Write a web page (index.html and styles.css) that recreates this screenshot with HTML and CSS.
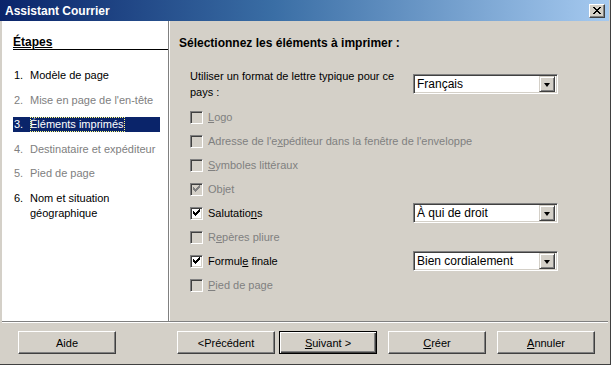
FILE: index.html
```html
<!DOCTYPE html>
<html>
<head>
    <title>Assistant Courrier</title>
    <meta charset="utf-8">
    <link rel="stylesheet" href="styles.css">
</head>
<body>
    <div class="window">
        <div class="titlebar">
            <span class="title">Assistant Courrier</span>
            <button class="close-btn">
                <svg width="8" height="7" viewBox="0 0 8 7" shape-rendering="crispEdges">
                    <path d="M0 0h2v1h-2zM6 0h2v1h-2zM1 1h2v1h-2zM5 1h2v1h-2zM2 2h4v1h-4zM3 3h2v1h-2zM2 4h4v1h-4zM1 5h2v1h-2zM5 5h2v1h-2zM0 6h2v1h-2zM6 6h2v1h-2z" fill="#000"/>
                </svg>
            </button>
        </div>

        <div class="main">
            <!-- étapes de l'assistant -->
            <div class="steps">
                <div class="steps-title">Étapes</div>
                <ul class="step-list">
                    <li class="step"><span class="num">1.</span><span>Modèle de page</span></li>
                    <li class="step disabled"><span class="num">2.</span><span>Mise en page de l'en-tête</span></li>
                    <li class="step active"><span class="num">3.</span><span class="focus">Éléments imprimés</span></li>
                    <li class="step disabled"><span class="num">4.</span><span>Destinataire et expéditeur</span></li>
                    <li class="step disabled"><span class="num">5.</span><span>Pied de page</span></li>
                    <li class="step"><span class="num">6.</span><span>Nom et situation<br>géographique</span></li>
                </ul>
            </div>

            <div class="page">
                <h2 class="page-title">Sélectionnez les éléments à imprimer :</h2>

                <div class="format-row">
                    <label class="format-label">Utiliser un format de lettre typique pour ce pays :</label>
                    <div class="combo"><span class="combo-value">Français</span><span class="combo-btn"></span></div>
                </div>

                <div class="options">
                    <div class="opt disabled"><span class="check"></span><span><u>L</u>ogo</span></div>
                    <div class="opt disabled"><span class="check"></span><span>Adresse de l'e<u>x</u>péditeur dans la fenêtre de l'enveloppe</span></div>
                    <div class="opt disabled"><span class="check"></span><span><u>S</u>ymboles littéraux</span></div>
                    <div class="opt disabled"><span class="check checked"></span><span>Objet</span></div>
                    <div class="opt">
                        <span class="check checked"></span><span class="opt-text">Salutatio<u>n</u>s</span>
                        <div class="combo"><span class="combo-value">À qui de droit</span><span class="combo-btn"></span></div>
                    </div>
                    <div class="opt disabled"><span class="check"></span><span>R<u>e</u>pères pliure</span></div>
                    <div class="opt">
                        <span class="check checked"></span><span class="opt-text">Formul<u>e</u> finale</span>
                        <div class="combo"><span class="combo-value">Bien cordialement</span><span class="combo-btn"></span></div>
                    </div>
                    <div class="opt disabled"><span class="check"></span><span><u>P</u>ied de page</span></div>
                </div>
            </div>
        </div>

        <div class="footer">
            <button class="btn">Aide</button>
            <div class="nav-buttons">
                <button class="btn">&lt;Précédent</button>
                <button class="btn default"><u>S</u>uivant &gt;</button>
                <button class="btn gap-left"><u>C</u>réer</button>
                <button class="btn gap-left"><u>A</u>nnuler</button>
            </div>
        </div>
    </div>
</body>
</html>
```

FILE: styles.css
```css
/* base */
body {
    margin: 0;
    padding: 0;
    font-family: "Liberation Sans", Arial, sans-serif;
    font-size: 11px;
    color: #000;
    background: #d4d0c8;
}

.window {
    width: 611px;
    height: 365px;
    box-sizing: border-box;
    background: #d4d0c8;
    padding: 0 2px 2px 2px;
    display: flex;
    flex-direction: column;
    border-bottom: 1px solid #404040;
    border-right: 1px solid #404040;
}

/* barre de titre */
.titlebar {
    height: 21px;
    margin: 0 -1px 0 -2px;
    padding: 0 4px 0 5px;
    display: flex;
    align-items: center;
    justify-content: space-between;
    background: linear-gradient(90deg, #0a246a 0%, #3a6ea5 45%, #a6caf0 100%);
}

.title {
    color: #fff;
    font-weight: bold;
    font-size: 12px;
}

.close-btn {
    width: 16px;
    height: 14px;
    padding: 0;
    display: flex;
    align-items: center;
    justify-content: center;
    background: #d4d0c8;
    border: 1px solid;
    border-color: #fff #404040 #404040 #fff;
    box-shadow: inset -1px -1px 0 #808080;
}

.main {
    height: 300px;
    display: flex;
    border-bottom: 1px solid #808080;
}

/* panneau gauche */
.steps {
    width: 166px;
    background: #fff;
    border-right: 1px solid #808080;
    padding-top: 14px;
}

.steps-title {
    margin-left: 11px;
    font-weight: bold;
    font-size: 12px;
    line-height: 14px;
    text-decoration: underline;
    border-bottom: 1px solid #000;
    padding-bottom: 0;
}

.step-list {
    list-style: none;
    margin: 18px 8px 0 11px;
    padding: 0;
    display: flex;
    flex-direction: column;
    gap: 9.5px;
}

.step {
    display: flex;
    line-height: 15px;
    min-height: 15px;
}

.step .num {
    width: 16px;
    padding-left: 1px;
    flex-shrink: 0;
}

.step.disabled {
    color: #808080;
}

.step.active {
    background: #0a246a;
    color: #fff;
    height: 15px;
}

.step .focus {
    outline: 1px dotted #ffff80;
    outline-offset: -1px;
    padding-right: 1px;
}

/* panneau droit */
.page {
    flex: 1;
    border-left: 1px solid #fff;
    padding: 14px 0 0 9px;
}

.page-title {
    margin: 0;
    font-size: 12px;
    font-weight: bold;
    line-height: 16px;
}

.format-row {
    display: grid;
    grid-template-columns: 223px 145px;
    align-items: center;
    margin: 17px 0 0 11px;
}

.format-label {
    width: 215px;
    line-height: 16px;
}

.options {
    margin: 5px 0 0 11px;
    display: flex;
    flex-direction: column;
}

.opt {
    height: 24px;
    display: grid;
    grid-template-columns: 18px 205px 145px;
    align-items: center;
}

.opt > span:nth-child(2) {
    grid-column: 2 / 4;
}

.opt .opt-text {
    grid-column: 2 / 3 !important;
}

.opt.disabled {
    color: #808080;
}

/* cases à cocher */
.check {
    width: 13px;
    height: 13px;
    box-sizing: border-box;
    background: #fff;
    border: 1px solid;
    border-color: #808080 #fff #fff #808080;
    box-shadow: inset 1px 1px 0 #404040, inset -1px -1px 0 #d4d0c8;
    position: relative;
}

.opt.disabled .check {
    background: #d4d0c8;
}

.check.checked::after {
    content: "";
    position: absolute;
    left: 2px;
    top: 1px;
    width: 7px;
    height: 7px;
    background: linear-gradient(#000, #000) 0 2px / 1px 3px no-repeat,
                linear-gradient(#000, #000) 1px 3px / 1px 3px no-repeat,
                linear-gradient(#000, #000) 2px 4px / 1px 3px no-repeat,
                linear-gradient(#000, #000) 3px 3px / 1px 3px no-repeat,
                linear-gradient(#000, #000) 4px 2px / 1px 3px no-repeat,
                linear-gradient(#000, #000) 5px 1px / 1px 3px no-repeat,
                linear-gradient(#000, #000) 6px 0 / 1px 3px no-repeat;
}

.opt.disabled .check.checked::after {
    filter: invert(50%);
}

/* liste déroulante */
.combo {
    width: 145px;
    height: 20px;
    box-sizing: border-box;
    background: #fff;
    border: 1px solid;
    border-color: #808080 #fff #fff #808080;
    box-shadow: inset 1px 1px 0 #404040, inset -1px -1px 0 #d4d0c8;
    display: flex;
    align-items: center;
    padding: 2px;
}

.combo-value {
    flex: 1;
    padding-left: 1px;
    font-size: 12px;
}

.combo-btn {
    width: 16px;
    height: 16px;
    box-sizing: border-box;
    background: #d4d0c8;
    border: 1px solid;
    border-color: #d4d0c8 #404040 #404040 #d4d0c8;
    box-shadow: inset 1px 1px 0 #fff, inset -1px -1px 0 #808080;
    position: relative;
}

.combo-btn::after {
    content: "";
    position: absolute;
    left: 4px;
    top: 6px;
    border-left: 3.5px solid transparent;
    border-right: 3.5px solid transparent;
    border-top: 4px solid #000;
}

/* boutons du bas */
.footer {
    flex: 1;
    border-top: 1px solid #fff;
    display: flex;
    align-items: flex-start;
    padding: 8px 13px 0 16px;
    justify-content: space-between;
}

.nav-buttons {
    display: flex;
    gap: 4px;
}

.btn {
    width: 98px;
    height: 23px;
    box-sizing: border-box;
    font-family: "Liberation Sans", Arial, sans-serif;
    font-size: 11px;
    color: #000;
    background: #d4d0c8;
    border: 1px solid;
    border-color: #fff #404040 #404040 #fff;
    box-shadow: inset -1px -1px 0 #808080;
    padding: 0;
}

.btn.default {
    border-color: #000;
    box-shadow: inset 1px 1px 0 #fff, inset -1px -1px 0 #404040, inset -2px -2px 0 #808080;
}

.btn.gap-left {
    margin-left: 7px;
}
```
